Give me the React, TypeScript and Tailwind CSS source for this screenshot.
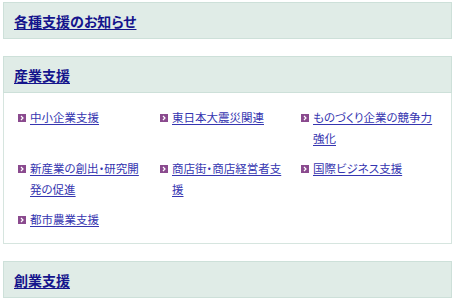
import React from "react";

const links: string[] = [
  "中小企業支援",
  "東日本大震災関連",
  "ものづくり企業の競争力強化",
  "新産業の創出・研究開発の促進",
  "商店街・商店経営者支援",
  "国際ビジネス支援",
  "都市農業支援",
];

function Arrow() {
  return (
    <svg width="8" height="8" viewBox="0 0 8 8" className="shrink-0 mt-[7px]">
      <rect width="8" height="8" fill="#8a4a8e" />
      <path d="M3 2 L5 4 L3 6" stroke="#ffffff" strokeWidth="1.2" fill="none" />
    </svg>
  );
}

function Header({ title }: { title: string }) {
  return (
    <div className="h-[37px] bg-[#e0ece7] border border-[#cde0d9] flex items-center pl-[10px]">
      <a
        href="#"
        className="text-[14px] font-bold text-[#14148c] underline underline-offset-2 leading-none"
      >
        {title}
      </a>
    </div>
  );
}

export default function App() {
  return (
    <div
      className="w-[455px] h-[305px] bg-white pt-[2px] px-[3px] flex flex-col gap-[17px] overflow-hidden [font-feature-settings:'palt']"
      style={{ fontFamily: '"Noto Sans CJK JP", "Noto Sans", sans-serif' }}
    >
      <Header title="各種支援のお知らせ" />
      <div className="flex flex-col">
        <Header title="産業支援" />
        <div className="border border-t-0 border-[#d6e5df] pt-[14px] pb-[13px] pl-[14px] pr-[10px] grid grid-cols-[142px_141px_1fr] gap-y-[9px]">
          {links.map((t, i) => (
            <div key={t} className="flex items-start gap-[4px]">
              <Arrow />
              <a
                href="#"
                className={
                  (i % 3 === 2 ? "w-[121px]" : "w-[116px]") +
                  " text-[11.5px] leading-[21px] text-[#3535b0] underline underline-offset-2"
                }
              >
                {t}
              </a>
            </div>
          ))}
        </div>
      </div>
      <Header title="創業支援" />
    </div>
  );
}
